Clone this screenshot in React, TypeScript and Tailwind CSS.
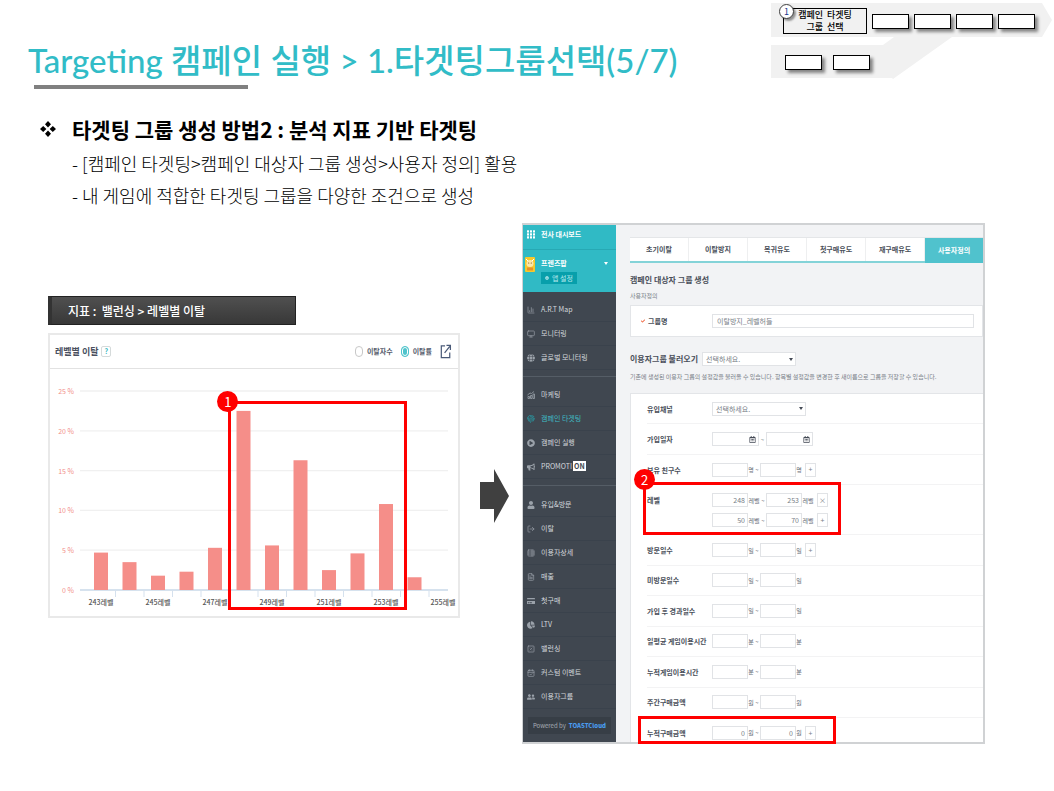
import type { ReactNode } from 'react';
import type { IconType } from 'react-icons';
import {
  FaBullhorn,
  FaCheck,
  FaCog,
  FaRegCalendarAlt,
  FaChartPie,
  FaCreditCard,
  FaFingerprint,
  FaGlobe,
  FaPlayCircle,
  FaUser,
  FaUserFriends,
} from 'react-icons/fa';
import { CalendarCheck, ChartColumn, FileText, LogOut, Monitor, SquarePercent, TableProperties } from 'lucide-react';

type AnyIcon = IconType | typeof Monitor;

/* ---------- step flow in the top right corner ---------- */

function StepBox() {
  return <div className="h-[15px] w-[37px] border border-black bg-white shadow-[3px_3px_3px_rgba(0,0,0,0.45)]" />;
}

function StepFlow() {
  return (
    <nav aria-label="단계" className="relative w-[283px] shrink-0 pt-2">
      <svg className="absolute left-0 top-0 h-[80px] w-[283px]" viewBox="0 0 283 80" aria-hidden="true">
        <path
          d="M0 3H271L281 20L271 37H181L122 79L121 78H0V45H112L123 37H0Z"
          fill="#f1f1f1"
        />
      </svg>
      <div className="relative flex items-center gap-[5px] pl-3">
        <div className="relative w-[84px] border border-black bg-[#f1f1f1] text-center text-[9px] font-medium leading-[12px] text-black">
          <p>캠페인&nbsp; 타겟팅</p>
          <p>그룹&nbsp; 선택</p>
          <span className="absolute -left-[5px] -top-[5px] flex size-[15px] items-center justify-center rounded-full border border-neutral-700 bg-white text-[9px] font-normal text-blue-900 shadow-[2px_2px_2px_rgba(0,0,0,0.4)]">
            1
          </span>
        </div>
        <StepBox />
        <StepBox />
        <StepBox />
        <StepBox />
      </div>
      <div className="relative flex gap-[11px] pl-[14px] pt-[21px]">
        <StepBox />
        <StepBox />
      </div>
    </nav>
  );
}

/* ---------- shared marks ---------- */

function Badge({ children, className }: { children: ReactNode; className: string }) {
  return (
    <span
      className={`absolute flex size-[21px] items-center justify-center rounded-full bg-[#ff0000] text-[13px] leading-none text-white ${className}`}
    >
      {children}
    </span>
  );
}

/* ---------- churn chart ---------- */

const bars = [
  { level: 243, value: 4.7 },
  { level: 244, value: 3.5 },
  { level: 245, value: 1.8 },
  { level: 246, value: 2.3 },
  { level: 247, value: 5.3 },
  { level: 248, value: 22.5 },
  { level: 249, value: 5.6 },
  { level: 250, value: 16.3 },
  { level: 251, value: 2.5 },
  { level: 252, value: 4.6 },
  { level: 253, value: 10.8 },
  { level: 254, value: 1.6 },
  { level: 255, value: 0 },
];

function Chart() {
  const base = 221;
  const unit = 7.96;
  const step = 28.5;
  return (
    <div className="relative">
      <svg viewBox="0 0 408 247" className="block w-full" role="img" aria-label="레벨별 이탈률">
        {[0, 5, 10, 15, 20, 25].map((v) => (
          <g key={v}>
            <line
              x1="30"
              x2="398"
              y1={base - v * unit}
              y2={base - v * unit}
              stroke={v === 0 ? '#c9d8e8' : '#f0f0f0'}
              strokeWidth="1.3"
            />
            <text x="24" y={base - v * unit + 3} textAnchor="end" className="fill-[#f28f8a] text-[7px]">
              {v} %
            </text>
          </g>
        ))}
        {bars.slice(0, 12).map((b, i) => (
          <g key={b.level}>
            <line x1={65.5 + i * step} x2={65.5 + i * step} y1={base} y2={base + 7} stroke="#d5e1ee" />
            <rect x={44 + i * step} y={base - b.value * unit} width="14" height={b.value * unit} fill="#f58e89" />
          </g>
        ))}
        {bars.map((b, i) =>
          i % 2 === 0 ? (
            <text
              key={b.level}
              x={51 + i * step}
              y="236"
              textAnchor="middle"
              className="fill-[#555555] text-[7px] font-medium"
            >
              {b.level}레벨
            </text>
          ) : null,
        )}
      </svg>
      <div className="absolute left-[43.7%] top-[13%] h-[84.5%] w-[43.7%] border-[3px] border-[#ff0000]">
        <Badge className="-left-[14px] -top-[13px]">1</Badge>
      </div>
    </div>
  );
}

function ExportIcon() {
  return (
    <svg viewBox="0 0 12 16" className="h-[15px] w-3" fill="none" stroke="#4a5a78" strokeWidth="1.3" aria-hidden="true">
      <path d="M5 2H1V14.5H10V9" />
      <path d="M4.5 9.5L10 2.5M6.5 1.5H10.7V6.5" />
    </svg>
  );
}

function Radio({ label, checked }: { label: string; checked?: boolean }) {
  return (
    <label className="flex items-center gap-1">
      <input
        type="radio"
        name="metric"
        defaultChecked={checked}
        className="h-[11px] w-[8px] appearance-none rounded-full border border-[#c8c8c8] bg-white checked:border-[#4fc4cc] checked:bg-[#4fc4cc] checked:shadow-[inset_0_0_0_1px_white]"
      />
      {label}
    </label>
  );
}

function ChartPanel() {
  return (
    <section>
      <h3 className="mr-[164px] border border-[#222222] border-l-4 border-l-[#333333] bg-gradient-to-b from-[#505050] to-[#383838] py-[4px] pl-4 text-[12px] font-medium leading-[19px] text-white">
        지표 :&nbsp; 밸런싱 &gt; 레벨별 이탈
      </h3>
      <div className="mt-2 border-2 border-[#e9e9e9] bg-white">
        <div className="flex h-[34px] items-center border-b border-[#e2e2e2] pl-[5px] pr-[6px]">
          <h4 className="text-[9px] font-bold text-[#4a4f5e]">레벨별 이탈</h4>
          <span className="ml-[3px] rounded-[2px] border border-[#d5dada] px-[2px] text-[7px] font-bold leading-[9px] text-[#2fb5bd]">
            ?
          </span>
          <div className="ml-auto flex items-center gap-2 text-[7px] font-bold text-[#555b6b]">
            <Radio label="이탈자수" />
            <Radio label="이탈률" checked />
            <button type="button" aria-label="새 창">
              <ExportIcon />
            </button>
          </div>
        </div>
        <Chart />
      </div>
    </section>
  );
}

/* ---------- console: sidebar ---------- */

function NavItem({ icon: Icon, label, active }: { icon: AnyIcon; label: ReactNode; active?: boolean }) {
  return (
    <li>
      <a
        href="#"
        className={`flex h-6 items-center gap-[6px] border-b border-[#3a424c] pl-1 text-[7px] ${
          active ? 'text-[#3fbcc5]' : 'text-[#d3d7dc]'
        }`}
      >
        <Icon size={8} className={active ? 'text-[#2b8f99]' : 'text-[#9ba2aa]'} />
        <span>{label}</span>
      </a>
    </li>
  );
}

function Sidebar() {
  return (
    <aside className="flex w-[93px] shrink-0 flex-col bg-[#404750]">
      <div className="bg-[#30bac5] text-white">
        <a href="#" className="flex h-[25px] items-center gap-[6px] border-b border-[#27a9b4] pb-[6px] pl-1 text-[7px] font-bold">
          <svg viewBox="0 0 8 9" className="h-[9px] w-2" fill="white" aria-hidden="true">
            {[0, 3, 6].map((y) => [0, 3, 6].map((x) => <rect key={`${x}-${y}`} x={x} y={y + 0.3} width="2" height="2.2" />))}
          </svg>
          전사 대시보드
        </a>
        <div className="flex h-[42px] items-start gap-[6px] pl-[2px] pr-2 pt-[6px]">
          <svg viewBox="0 0 10 15" className="mt-[1px] h-[15px] w-[10px]" aria-hidden="true">
            <rect width="10" height="15" rx="1" fill="#f7c92c" />
            <circle cx="5" cy="6.5" r="3.5" fill="#fbe7a8" />
            <path d="M1 2L3 4M9 2L7 4" stroke="#fff" />
            <circle cx="3.7" cy="6" r=".6" fill="#7b4a12" />
            <circle cx="6.3" cy="6" r=".6" fill="#7b4a12" />
            <rect x="2" y="10.5" width="6" height="3" fill="#e8902a" />
          </svg>
          <div className="flex-1">
            <p className="flex items-center justify-between text-[7px] font-bold leading-[15px]">
              프렌즈팝
              <svg viewBox="0 0 4 3" className="h-[3px] w-1" fill="white" aria-hidden="true">
                <path d="M0 0H4L2 3Z" />
              </svg>
            </p>
            <button type="button" className="mt-[1px] flex h-3 items-center gap-[3px] bg-[#079fab] px-1 text-[7px] text-[#b5e8ec]">
              <FaCog size={4} />앱 설정
            </button>
          </div>
        </div>
      </div>
      <ul className="border-b border-[#555d66] py-[6px]">
        <NavItem icon={ChartColumn} label="A.R.T Map" />
        <NavItem icon={Monitor} label="모니터링" />
        <NavItem icon={FaGlobe} label="글로벌 모니터링" />
      </ul>
      <ul className="border-b border-[#555d66] py-[6px]">
        <NavItem icon={GrowthIcon} label="마케팅" />
        <NavItem icon={FaFingerprint} label="캠페인 타겟팅" active />
        <NavItem icon={FaPlayCircle} label="캠페인 실행" />
        <NavItem
          icon={FaBullhorn}
          label={
            <>
              PROMOTI<b className="ml-px bg-white px-[1px] text-[#404750]">ON</b>
            </>
          }
        />
      </ul>
      <ul className="pt-[7px]">
        <NavItem icon={FaUser} label="유입&방문" />
        <NavItem icon={LogOut} label="이탈" />
        <NavItem icon={TableProperties} label="이용자상세" />
        <NavItem icon={FileText} label="매출" />
        <NavItem icon={FaCreditCard} label="첫구매" />
        <NavItem icon={FaChartPie} label="LTV" />
        <NavItem icon={SquarePercent} label="밸런싱" />
        <NavItem icon={CalendarCheck} label="커스텀 이벤트" />
        <NavItem icon={FaUserFriends} label="이용자그룹" />
      </ul>
      <p className="mx-[5px] mb-2 mt-[8px] flex h-[17px] items-center justify-center gap-[3px] bg-[#373e46] text-[6px] text-[#a7adb4]">
        Powered by <b className="font-black text-[#4a9cf0]">TOASTCloud</b>
      </p>
    </aside>
  );
}

const GrowthIcon: IconType = ({ size, className }) => (
  <svg width={size} height={size} viewBox="0 0 16 16" className={className} fill="none" stroke="currentColor" strokeWidth="1.6">
    <path d="M2 15V11H5V15ZM7 15V9H10V15ZM12 15V6H15V15ZM1 8L6 4L9 5L14 1" />
  </svg>
);

/* ---------- console: form ---------- */

const fieldClass = 'h-[14px] border border-[#e1e3e6] bg-white text-[7px] text-[#777d86]';

function Select({ label }: { label: string }) {
  return (
    <span className="relative flex w-[94px] items-center">
      <select aria-label={label} className={`${fieldClass} w-full appearance-none pl-[3px] leading-[12px]`}>
        <option>선택하세요.</option>
      </select>
      <svg viewBox="0 0 4 3" className="pointer-events-none absolute right-[3px] h-[3px] w-1" fill="#444a55" aria-hidden="true">
        <path d="M0 0H4L2 3Z" />
      </svg>
    </span>
  );
}

function Range({
  label,
  unit,
  from,
  to,
  action,
}: {
  label: string;
  unit: string;
  from?: string;
  to?: string;
  action?: string;
}) {
  const unitWidth = unit.length > 1 ? 'w-3' : 'w-[6px]';
  return (
    <div className="flex items-center text-[6px] text-[#666c76]">
      <input aria-label={`${label} 최소`} defaultValue={from} className={`${fieldClass} w-9 pr-[2px] text-right`} />
      <span className={`${unitWidth} whitespace-nowrap text-center`}>{unit}</span>
      <span className="w-[6px] text-center">~</span>
      <input aria-label={`${label} 최대`} defaultValue={to} className={`${fieldClass} w-9 pr-[2px] text-right`} />
      <span className={`${unitWidth} whitespace-nowrap text-center`}>{unit}</span>
      {action && (
        <button type="button" className={`${fieldClass} ml-[3px] flex w-[11px] items-center justify-center`}>
          {action}
        </button>
      )}
    </div>
  );
}

function DateField({ label }: { label: string }) {
  return (
    <span className="relative flex items-center">
      <input aria-label={label} className={`${fieldClass} w-[47px]`} />
      <FaRegCalendarAlt size={7} className="absolute right-[3px] text-[#444a55]" />
    </span>
  );
}

function Row({ label, children }: { label: string; children: ReactNode }) {
  return (
    <div className="flex flex-1 items-center border-b border-[#f3f3f4]">
      <RowLabel>{label}</RowLabel>
      {children}
    </div>
  );
}

function RowLabel({ children }: { children: ReactNode }) {
  return <span className="w-[65px] shrink-0 whitespace-nowrap text-[7px] font-bold leading-[14px] text-[#4a4f5a]">{children}</span>;
}

function Console() {
  const tabs = ['초기이탈', '이탈방지', '복귀유도', '첫구매유도', '재구매유도'];
  return (
    <section className="flex border-2 border-l border-[#d0d2d4] bg-[#f2f3f5]">
      <Sidebar />
      <div className="flex flex-1 flex-col pl-[14px] pt-3">
        <div className="flex h-[26px] border-b-2 border-t border-b-[#84d3d8] border-t-[#e4e6e8] bg-white text-[7px] font-bold text-[#4a4f5a]">
          {tabs.map((t) => (
            <button key={t} type="button" className="flex-1 border-r border-[#eeeff0]">
              {t}
            </button>
          ))}
          <button type="button" className="-mb-[2px] flex-1 bg-[#50c2cd] text-white">
            사용자정의
          </button>
        </div>
        <h3 className="mt-[10px] text-[8px] font-bold leading-[14px] text-[#4a4f5a]">캠페인 대상자 그룹 생성</h3>
        <p className="mt-[4px] text-[6px] leading-[10px] text-[#777d86]">사용자정의</p>
        <div className="mt-[4px] flex h-8 items-center border border-[#e3e5e8] bg-white pl-[10px] pr-2">
          <label htmlFor="group-name" className="flex w-[71px] items-center gap-[3px] text-[7px] font-bold text-[#4a4f5a]">
            <FaCheck size={4} className="text-[#f0613a]" />
            그룹명
          </label>
          <input id="group-name" defaultValue="이탈방지_레벨허들" className={`${fieldClass} min-w-0 flex-1 pl-1`} />
        </div>
        <div className="mt-[15px] flex items-center gap-[4px]">
          <h3 className="text-[8px] font-bold leading-[14px] text-[#4a4f5a]">이용자그룹 불러오기</h3>
          <Select label="이용자그룹" />
        </div>
        <p className="mt-[6px] whitespace-nowrap text-[6px] leading-[10px] text-[#777d86]">
          기존에 생성된 이용자 그룹의 설정값을 불러올 수 있습니다. 항목별 설정값을 변경한 후 새이름으로 그룹을 저장할 수 있습니다.
        </p>
        <div className="mt-[11px] flex flex-1 flex-col border-l border-t border-[#e3e5e8] bg-white pl-4">
          <Row label="유입채널">
            <Select label="유입채널" />
          </Row>
          <Row label="가입일자">
            <DateField label="가입일자 시작" />
            <span className="w-[7px] text-center text-[6px] text-[#777d86]">~</span>
            <DateField label="가입일자 종료" />
          </Row>
          <Row label="보유 친구수">
            <Range label="보유 친구수" unit="명" action="+" />
          </Row>
          <div className="relative flex h-[50px] border-b border-[#f3f3f4] pt-2">
            <RowLabel>레벨</RowLabel>
            <div className="flex flex-col gap-[6px]">
              <Range label="레벨 1" unit="레벨" from="248" to="253" action="×" />
              <Range label="레벨 2" unit="레벨" from="50" to="70" action="+" />
            </div>
            <div className="pointer-events-none absolute -left-1 -top-[3px] h-[53px] w-[198px] border-[3px] border-[#ff0000]">
              <Badge className="-left-[12px] -top-[16px]">2</Badge>
            </div>
          </div>
          <Row label="방문일수">
            <Range label="방문일수" unit="일" action="+" />
          </Row>
          <Row label="미방문일수">
            <Range label="미방문일수" unit="일" />
          </Row>
          <Row label="가입 후 경과일수">
            <Range label="가입 후 경과일수" unit="일" />
          </Row>
          <Row label="일평균 게임이용시간">
            <Range label="일평균 게임이용시간" unit="분" />
          </Row>
          <Row label="누적게임이용시간">
            <Range label="누적게임이용시간" unit="분" />
          </Row>
          <Row label="주간구매금액">
            <Range label="주간구매금액" unit="원" />
          </Row>
          <div className="relative flex h-6 items-start pt-2">
            <RowLabel>누적구매금액</RowLabel>
            <Range label="누적구매금액" unit="원" from="0" to="0" action="+" />
            <div className="pointer-events-none absolute -left-[9px] -top-[2px] h-7 w-[198px] border-[3px] border-[#ff0000]" />
          </div>
        </div>
      </div>
    </section>
  );
}

/* ---------- page ---------- */

export default function App() {
  return (
    <main className="min-h-screen bg-white font-['Noto_Sans_CJK_KR',sans-serif] text-black">
      <header className="flex justify-between pl-7">
        <div className="pt-9">
          <h1 className="whitespace-nowrap font-['Lato','Noto_Sans_CJK_KR',sans-serif] text-[33px] font-medium leading-[49px] text-[#31bcc7]">
            Targeting 캠페인 실행 &gt; 1.타겟팅그룹선택(5/7)
          </h1>
          <div className="ml-[6px] h-1 w-[214px] bg-[#808080]" />
        </div>
        <StepFlow />
      </header>

      <section className="pl-10 pt-[26px]">
        <h2 className="flex items-center text-[21px] font-bold leading-7">
          <svg viewBox="0 0 16 16" className="mr-4 size-4" aria-hidden="true">
            <path d="M8 0L11 3.2L8 6.4L5 3.2ZM8 9.6L11 12.8L8 16L5 12.8ZM3.2 5L6.4 8L3.2 11L0 8ZM12.8 5L16 8L12.8 11L9.6 8Z" />
          </svg>
          타겟팅 그룹 생성 방법2 : 분석 지표 기반 타겟팅
        </h2>
        <div className="pl-8 pt-1 text-[18px] font-light leading-8">
          <p>- [캠페인 타겟팅&gt;캠페인 대상자 그룹 생성&gt;사용자 정의] 활용</p>
          <p>- 내 게임에 적합한 타겟팅 그룹을 다양한 조건으로 생성</p>
        </div>
      </section>

      <div className="grid grid-cols-[412fr_62px_463fr] items-start pb-12 pl-12 pr-[69px] pt-[12px]">
        <div className="pt-[73px]">
          <ChartPanel />
        </div>
        <div className="pl-5 pt-[246px]">
          <svg viewBox="0 0 29 54" className="h-[54px] w-[29px]" fill="#404040" aria-hidden="true">
            <path d="M0 13H14V0L29 27L14 54V40H0Z" />
          </svg>
        </div>
        <Console />
      </div>
    </main>
  );
}
